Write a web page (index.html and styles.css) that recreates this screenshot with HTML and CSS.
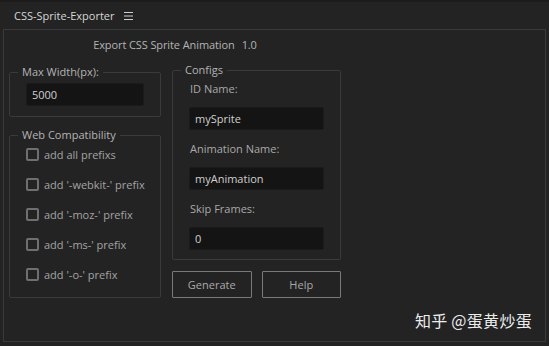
FILE: index.html
```html
<!DOCTYPE html>
<html lang="en">
<head>
    <meta charset="UTF-8">
    <title>CSS-Sprite-Exporter</title>
    <link rel="stylesheet" href="styles.css">
</head>
<body>

<div class="titlebar">
    <span class="title">CSS-Sprite-Exporter</span>
    <svg class="menu" width="9" height="8" viewBox="0 0 9 8">
        <path d="M0 0.5H9M0 4H9M0 7.5H9" stroke="#d0d0d0" stroke-width="1"/>
    </svg>
</div>

<div class="panel">
    <div class="content">
        <div class="heading">Export CSS Sprite Animation<span class="version">1.0</span></div>

        <div class="columns">
            <div class="left">
                <fieldset class="box width-box">
                    <legend>Max Width(px):</legend>
                    <input type="text" class="field" value="5000">
                </fieldset>

                <fieldset class="box compat-box">
                    <legend>Web Compatibility</legend>
                    <label class="check"><span class="tick"></span>add all prefixs</label>
                    <label class="check"><span class="tick"></span>add '-webkit-' prefix</label>
                    <label class="check"><span class="tick"></span>add '-moz-' prefix</label>
                    <label class="check"><span class="tick"></span>add '-ms-' prefix</label>
                    <label class="check"><span class="tick"></span>add '-o-' prefix</label>
                </fieldset>
            </div>

            <div class="right">
                <fieldset class="box configs">
                    <legend>Configs</legend>
                    <div class="label">ID Name:</div>
                    <input type="text" class="field" value="mySprite">
                    <div class="label">Animation Name:</div>
                    <input type="text" class="field" value="myAnimation">
                    <div class="label">Skip Frames:</div>
                    <input type="text" class="field" value="0">
                </fieldset>

                <div class="buttons">
                    <button type="button">Generate</button>
                    <button type="button">Help</button>
                </div>
            </div>
        </div>
    </div>

    <div class="watermark">知乎 @蛋黄炒蛋</div>
</div>

</body>
</html>
```

FILE: styles.css
```css
body {
    margin: 0;
    background-color: #232323;
    font-family: "Open Sans", "Noto Sans", sans-serif;
    font-size: 11px;
    color: #a9a9a9;
    height: 346px;
    overflow: hidden;
}
.titlebar {
    height: 29px;
    display: flex;
    align-items: center;
    padding-left: 14px;
    border-top: 2px solid #1c1c1c;
    box-sizing: border-box;
    color: #d6d6d6;
}
.title {
    font-size: 11px;
}
.menu {
    margin-left: 9px;
    margin-top: 1px;
}
.panel {
    margin: 0 3px;
    height: 313px;
    border: 1px solid #3a3a3a;
    box-sizing: border-box;
    position: relative;
}
.content {
    width: 332px;
    margin-left: 5px;
}
.heading {
    text-align: center;
    padding-top: 7px;
    height: 27px;
    color: #b4b4b4;
    letter-spacing: -0.1px;
}
.version {
    margin-left: 7px;
}
.columns {
    display: flex;
    gap: 11px;
}
.left {
    width: 152px;
}
.right {
    width: 169px;
}
.box {
    margin: 0;
    border: 1px solid #3a3a3a;
    border-radius: 2px;
    padding: 0;
}
legend {
    margin-left: -8px;
    padding: 0 4px;
    font-size: 11px;
    line-height: 12px;
    color: #b4b4b4;
}
.field {
    display: block;
    box-sizing: border-box;
    height: 23px;
    background-color: #141414;
    border: 1px solid #1b1b1b;
    border-radius: 2px;
    color: #d0d0d0;
    font-family: inherit;
    font-size: 11px;
    padding: 0 5px;
    outline: none;
}
.width-box {
    padding: 5px 16px 10px 16px;
    margin-top: 2px;
}
.width-box .field {
    width: 118px;
}
.compat-box {
    margin-top: 12px;
    padding: 0 0 8px 16px;
}
.check {
    display: flex;
    align-items: center;
    height: 30px;
    color: #a3a3a3;
}
.check:first-of-type {
    margin-top: -2px;
}
.tick {
    width: 13px;
    height: 13px;
    box-sizing: border-box;
    border: 2px solid #6f6f6f;
    border-radius: 2px;
    margin-right: 5px;
}
.configs {
    padding: 0 16px 9px 16px;
}
.configs .label {
    padding-left: 1px;
    height: 18px;
    margin-top: 10px;
    margin-bottom: 9px;
    line-height: 18px;
}
.configs .label:first-of-type {
    margin-top: 4px;
}
.configs .field {
    width: 135px;
}
.buttons {
    display: flex;
    gap: 10px;
    margin-top: 11px;
}
.buttons button {
    width: 80px;
    height: 27px;
    background: transparent;
    border: 1px solid #7a7a7a;
    border-radius: 1px;
    color: #a9a9a9;
    font-family: inherit;
    font-size: 11px;
}
.watermark {
    position: absolute;
    right: 13px;
    bottom: 9px;
    font-family: "Noto Sans CJK SC", sans-serif;
    font-size: 16px;
    letter-spacing: 0.3px;
    color: #ececec;
}
```
